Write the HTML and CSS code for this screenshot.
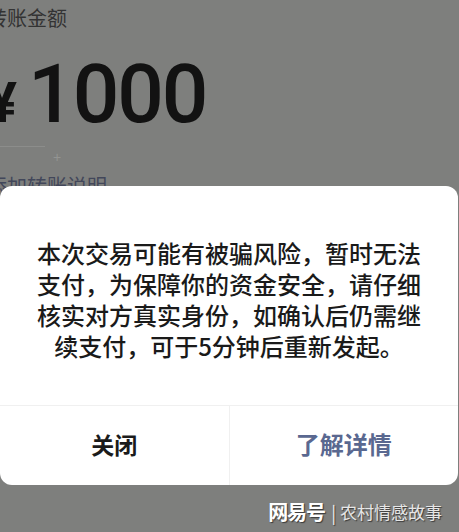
FILE: index.html
```html
<!DOCTYPE html>
<html lang="zh-CN">
<head>
    <meta charset="UTF-8">
    <meta name="viewport" content="width=device-width, initial-scale=1.0">
    <title>转账</title>
    <link rel="stylesheet" href="styles.css">
</head>
<body>
    <div class="page">
        <div class="label">转账金额</div>

        <div class="amount">
            <span class="currency">¥</span>
            <span class="value">1000</span>
        </div>

        <div class="input-line">
            <div class="underline"></div>
            <span class="plus">+</span>
        </div>

        <div class="remark">添加转账说明</div>
    </div>

    <div class="dialog">
        <div class="dialog-body">
            <p class="message">
                本次交易可能有被骗风险，暂时无法<br>
                支付，为保障你的资金安全，请仔细<br>
                核实对方真实身份，如确认后仍需继<br>
                续支付，可于5分钟后重新发起。
            </p>
        </div>
        <div class="dialog-actions">
            <button class="btn btn-close">关闭</button>
            <button class="btn btn-more">了解详情</button>
        </div>
    </div>

    <div class="watermark">
        <span class="brand">网易号</span>
        <span class="sep">|</span>
        <span class="author">农村情感故事</span>
    </div>
</body>
</html>
```

FILE: styles.css
```css
* {
    margin: 0;
    padding: 0;
    box-sizing: border-box;
}

html, body {
    height: 100%;
}

body {
    background: #7e7f7d;
    font-family: "Noto Sans CJK SC", "Noto Sans", sans-serif;
    color: #161616;
    position: relative;
    overflow: hidden;
}

.page {
    padding-top: 6px;
    margin-left: -13px;
}

.label {
    font-size: 20px;
    line-height: 24px;
    color: #333333;
}

.amount {
    display: flex;
    align-items: baseline;
    margin-top: 24px;
    height: 80px;
    color: #121212;
    font-family: Roboto, "Liberation Sans", sans-serif;
}

.currency {
    font-size: 56px;
    line-height: 80px;
    font-weight: 700;
}

.value {
    font-size: 82px;
    line-height: 80px;
    font-weight: 500;
    margin-left: 11px;
    letter-spacing: -2px;
}

.input-line {
    display: flex;
    align-items: flex-start;
    margin-top: 5px;
    height: 30px;
}

.underline {
    width: 58px;
    border-bottom: 1px solid #8c8d8b;
    margin-top: 7px;
}

.plus {
    font-size: 14px;
    line-height: 14px;
    color: #939492;
    margin-left: 8px;
    margin-top: 11px;
    font-family: "Liberation Sans", sans-serif;
}

.remark {
    font-size: 20px;
    line-height: 24px;
    color: #42475a;
    margin-top: 5px;
}

.dialog {
    position: absolute;
    left: 0;
    top: 186px;
    width: 458px;
    height: 299px;
    background: #ffffff;
    border-radius: 12px;
    display: flex;
    flex-direction: column;
    overflow: hidden;
}

.dialog-body {
    flex: 1;
    display: flex;
    align-items: center;
    justify-content: center;
    padding-top: 6px;
}

.message {
    font-size: 24px;
    line-height: 31px;
    font-weight: 500;
    text-align: center;
    color: #1a1a1a;
}

.dialog-actions {
    display: flex;
    height: 80px;
    border-top: 1px solid #f0f0f0;
}

.btn {
    flex: 1;
    background: none;
    border: none;
    font-family: "Noto Sans CJK SC", sans-serif;
    font-size: 23px;
    font-weight: 700;
    padding-bottom: 4px;
}

.btn-close {
    color: #1b1b1b;
    border-right: 1px solid #f0f0f0;
}

.btn-more {
    color: #5a6890;
    font-size: 24px;
}

.watermark {
    position: absolute;
    right: 17px;
    top: 497px;
    display: flex;
    align-items: center;
    color: #ececec;
    text-shadow: 1px 1px 1px #3a3a3a;
}

.brand {
    font-size: 20px;
    font-weight: 700;
    color: #ffffff;
    letter-spacing: -1px;
}

.sep {
    font-size: 18px;
    margin: 0 4px 0 6px;
}

.author {
    font-size: 17px;
    color: #e6e6e6;
}
```
